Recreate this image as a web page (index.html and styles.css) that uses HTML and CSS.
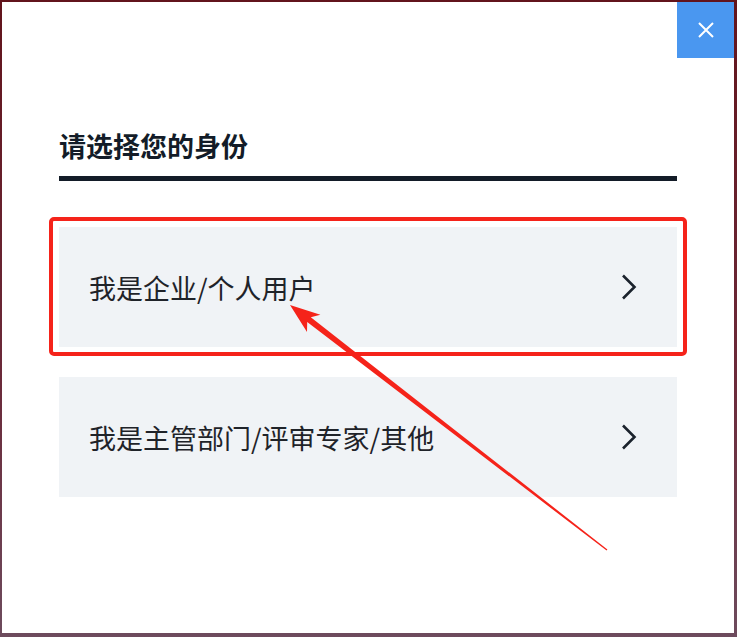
FILE: index.html
```html
<!DOCTYPE html>
<html lang="zh-CN">
<head>
  <meta charset="UTF-8" />
  <meta name="viewport" content="width=device-width, initial-scale=1.0"/>
  <title>请选择您的身份</title>
  <link rel="stylesheet" href="styles.css">
</head>
<body>
  <div class="dialog">
    <button class="close" aria-label="关闭">
      <svg width="16" height="16" viewBox="0 0 16 16"><path d="M1 1 L15 15 M15 1 L1 15" stroke="#fff" stroke-width="2" fill="none"/></svg>
    </button>
    <h2 class="title">请选择您的身份</h2>
    <div class="options">
      <a class="option marked" href="#">
        <span>我是企业/个人用户</span>
        <svg class="chevron" width="16" height="26" viewBox="0 0 16 26"><path d="M2 1.5 L13.5 13 L2 24.5" stroke="#1a222c" stroke-width="2.6" fill="none"/></svg>
      </a>
      <a class="option" href="#">
        <span>我是主管部门/评审专家/其他</span>
        <svg class="chevron" width="16" height="26" viewBox="0 0 16 26"><path d="M2 1.5 L13.5 13 L2 24.5" stroke="#1a222c" stroke-width="2.6" fill="none"/></svg>
      </a>
    </div>
  </div>

  <!-- annotation arrow -->
  <svg class="arrow" width="737" height="637" viewBox="0 0 737 637">
    <polygon fill="#f5231a" points="290,305 320.4,314.7 310.8,317.3 607.4,549.4 606.6,550.6 307.2,322.1 307,332.1"/>
  </svg>
</body>
</html>
```

FILE: styles.css
```css
html, body {
  margin: 0;
  padding: 0;
}
body {
  font-family: "Noto Sans CJK SC", "Noto Sans", sans-serif;
  background: linear-gradient(#62141c, #6b2a3a 60%, #6d4b5d);
  width: 737px;
  height: 637px;
  padding: 2px 3px 4px 2px;
  box-sizing: border-box;
  overflow: hidden;
  position: relative;
}
.dialog {
  position: relative;
  background-color: #fff;
  width: 732px;
  height: 631px;
  padding: 125px 57px 0;
  box-sizing: border-box;
}
.close {
  position: absolute;
  top: 0;
  right: 0;
  width: 57px;
  height: 56px;
  border: none;
  background-color: #4a97f0;
  display: flex;
  align-items: center;
  justify-content: center;
  padding: 0;
  cursor: pointer;
}
.title {
  margin: 0;
  font-size: 27px;
  font-weight: 700;
  line-height: 38px;
  color: #131c28;
  padding-bottom: 11px;
  border-bottom: 5px solid #131c28;
}
.options {
  display: flex;
  flex-direction: column;
  gap: 30px;
  margin-top: 46px;
}
.option {
  position: relative;
  display: flex;
  align-items: center;
  justify-content: space-between;
  height: 120px;
  padding: 0 40px 0 30px;
  background-color: #f0f3f6;
  color: #1f2329;
  font-size: 27px;
  text-decoration: none;
}
.option.marked::after {
  content: "";
  position: absolute;
  top: -10px;
  left: -10px;
  right: -10px;
  bottom: -9px;
  border: 4px solid #f5231a;
  border-radius: 5px;
}
.arrow {
  position: absolute;
  top: 0;
  left: 0;
  pointer-events: none;
}
```
